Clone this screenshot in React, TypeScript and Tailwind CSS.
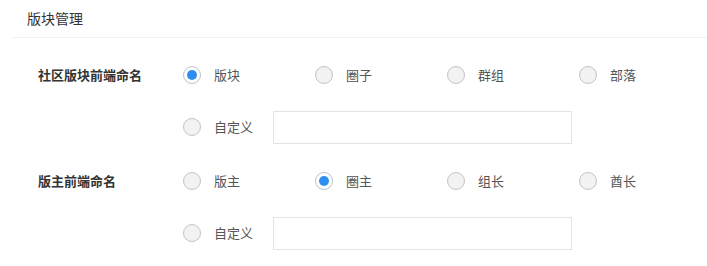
import { useState } from "react";

type RadioProps = {
  checked: boolean;
  label: string;
  onClick: () => void;
  fixed?: boolean;
};

function Radio({ checked, label, onClick, fixed = true }: RadioProps) {
  return (
    <button type="button" onClick={onClick} className={fixed ? "flex items-center w-[132px] shrink-0 text-left" : "flex items-center shrink-0 text-left"}>
      {checked ? (
        <span className="w-[18px] h-[18px] rounded-full border border-[#b9c3cf] bg-white flex items-center justify-center shrink-0">
          <span className="w-[10px] h-[10px] rounded-full bg-[#2e8fee]" />
        </span>
      ) : (
        <span className="w-[18px] h-[18px] rounded-full border border-[#c4c4c4] bg-[#f2f2f2] shrink-0" />
      )}
      <span className="ml-[13px] text-[13px] text-[#555]">{label}</span>
    </button>
  );
}

function NameGroup({ title, options, initial }: { title: string; options: string[]; initial: number }) {
  const [selected, setSelected] = useState(initial);
  return (
    <div className="flex">
      <div className="w-[145px] shrink-0 h-[34px] flex items-center text-[13px] font-bold text-[#333]">{title}</div>
      <div className="flex flex-col gap-[18px]">
        <div className="flex h-[34px] items-center">
          {options.map((o, i) => (
            <Radio key={o} label={o} checked={selected === i} onClick={() => setSelected(i)} />
          ))}
        </div>
        <div className="flex h-[34px] items-center">
          <Radio label="自定义" fixed={false} checked={selected === -1} onClick={() => setSelected(-1)} />
          <input className="ml-[20px] w-[299px] h-[33px] border border-[#e3e3e3] outline-none px-2 text-[13px]" />
        </div>
      </div>
    </div>
  );
}

export default function App() {
  return (
    <div className="w-[707px] h-[266px] bg-white font-['Noto_Sans_CJK_SC','Noto_Sans',sans-serif] overflow-hidden">
      <div className="ml-3 h-[38px] border-b border-[#f0f0f0] flex items-center pl-[15px] text-[14px] text-[#333]">
        版块管理
      </div>
      <div className="pl-[38px] pt-[20px] flex flex-col gap-5">
        <NameGroup title="社区版块前端命名" options={["版块", "圈子", "群组", "部落"]} initial={0} />
        <NameGroup title="版主前端命名" options={["版主", "圈主", "组长", "酋长"]} initial={1} />
      </div>
    </div>
  );
}
